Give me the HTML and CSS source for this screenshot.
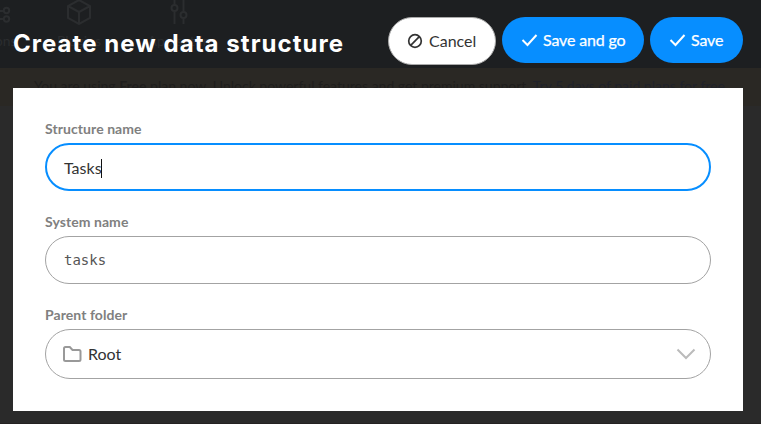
FILE: index.html
```html
<!DOCTYPE html>
<html lang="en">
<head>
<meta charset="utf-8">
<title>Create new data structure</title>
<link rel="stylesheet" href="styles.css">
</head>
<body>
<div class="backdrop">
  <div class="topbar">
    <div class="nav nav-versions">
      <svg width="24" height="26" viewBox="0 0 24 26"><path d="M0 11h17M0 19h17"/><circle cx="19.500" cy="10.500" r="2.700"/><circle cx="19.500" cy="19" r="2.700"/></svg>
      <span>Versions</span>
    </div>
    <div class="nav nav-plugins">
      <svg width="26" height="26" viewBox="0 0 26 26"><path d="M13 1l11 6v12l-11 6-11-6V7zM2 7l11 6 11-6M13 13v12"/></svg>
      <span>Plugins</span>
    </div>
    <div class="nav nav-settings">
      <svg width="20" height="26" viewBox="0 0 20 26"><path d="M5.500 1v5M5.500 12v13M14.500 1v12M14.500 19v6"/><circle cx="5.500" cy="9" r="3"/><circle cx="14.500" cy="16" r="3"/></svg>
      <span>App settin</span>
    </div>
  </div>
  <div class="notice">You are using <b>Free</b> plan now. Unlock powerful features and get premium support. <i>Try 5 days of paid plans for free</i></div>
</div>
<main class="dialog">
  <header class="header">
    <h1 class="title">Create new data structure</h1>
    <div class="actions">
      <button class="btn cancel"><svg width="16" height="16" viewBox="0 0 16 16"><circle cx="8" cy="8" r="6.300"/><path d="M3.700 12.300l8.600-8.600"/></svg>Cancel</button>
      <button class="btn primary"><svg width="17" height="14" viewBox="0 0 17 14"><path d="M1.500 7l5 5L15.500 2"/></svg>Save and go</button>
      <button class="btn primary"><svg width="17" height="14" viewBox="0 0 17 14"><path d="M1.500 7l5 5L15.500 2"/></svg>Save</button>
    </div>
  </header>
  <section class="panel">
    <div class="label">Structure name</div>
    <div class="field focused"><span>Tasks</span><span class="caret"></span></div>
    <div class="label">System name</div>
    <div class="field mono">tasks</div>
    <div class="label">Parent folder</div>
    <div class="field select">
      <svg class="folder" width="20" height="18" viewBox="0 0 20 18"><path d="M2 3.500Q2 2 3.500 2h4.300l2.700 3h6.500Q18.500 5 18.500 6.500v8Q18.500 16 17 16H3.500Q2 16 2 14.500z"/></svg>
      <span>Root</span>
      <svg class="chevron" width="20" height="12" viewBox="0 0 20 12"><path d="M1.500 1.500l8.500 8.500 8.500-8.500"/></svg>
    </div>
  </section>
</main>
</body>
</html>
```
FILE: styles.css
```css
* { box-sizing: border-box; }
body {
  margin: 0;
  height: 424px;
  overflow: hidden;
  background: #2a2a2a;
  font: 16px/20px Lato, sans-serif;
  color: #333;
}
svg { fill: none; stroke: currentColor; stroke-width: 2; flex: none; }
.backdrop { position: absolute; inset: 0; border-bottom: 1px solid #242222; }
.topbar { height: 68px; background: #1d1f21; color: #2b2d2f; position: relative; }
.nav {
  position: absolute;
  top: -1px;
  width: 90px;
  display: flex;
  flex-direction: column;
  align-items: center;
  gap: 6px;
  font-size: 14px;
}
.nav-versions { left: -56px; padding-left: 3px; top: -4px; gap: 9px; }
.nav-versions svg { transform: translate(8px, 4px); }
.nav-plugins { left: 34px; }
.nav-settings { left: 134px; }
.notice {
  height: 38px;
  padding: 7px 0 0 34px;
  background: #2a2824;
  color: #1f1e1d;
  font-size: 14px;
  line-height: 22px;
  white-space: nowrap;
}
.notice i { font-style: normal; color: #20222a; }
.dialog { position: relative; padding: 0 18px 0 13px; }
.header { height: 88px; display: flex; justify-content: space-between; align-items: flex-start; }
.title {
  margin: 29px 0 0;
  font: 700 24px/30px Inter, sans-serif;
  letter-spacing: 1.05px;
  color: #fff;
  white-space: nowrap;
}
.actions { display: flex; gap: 6px; padding-top: 17px; }
.btn {
  display: flex;
  align-items: center;
  height: 46px;
  padding: 0 19px;
  border: 0;
  border-radius: 24px;
  font: 16px/20px Lato, sans-serif;
  white-space: nowrap;
}
.cancel { width: 108px; height: 48px; padding-left: 18px; gap: 6px; background: #fff; color: #333; border: 1px solid #aaa; }
.cancel svg { stroke-width: 1.700; }
.primary { width: 142px; gap: 5px; background: #078eff; color: #fff; letter-spacing: -.15px; -webkit-text-stroke: .25px #fff; }
.primary:last-child { width: 93px; }
.panel { height: 323px; padding: 31px 32px 0; background: #fff; }
.label { height: 20px; margin-bottom: 4px; font-size: 14px; font-weight: 700; line-height: 20px; letter-spacing: .07px; color: #808080; }
.field {
  display: flex;
  align-items: center;
  height: 48px;
  margin-bottom: 21px;
  padding: 2px 18px 0;
  border: 1px solid #a3a3a3;
  border-radius: 25px;
}
.focused { border: 2px solid #078eff; padding-left: 17px; }
.caret { width: 1px; height: 19px; margin-left: -1px; background: #111; }
.mono { padding-top: 0; font: 14px/20px "DejaVu Sans Mono", monospace; color: #555; }
.select { height: 50px; padding: 0 14px 0 16px; gap: 6px; }
.folder { color: #999; }
.chevron { margin-left: auto; color: #bbb; }
```
